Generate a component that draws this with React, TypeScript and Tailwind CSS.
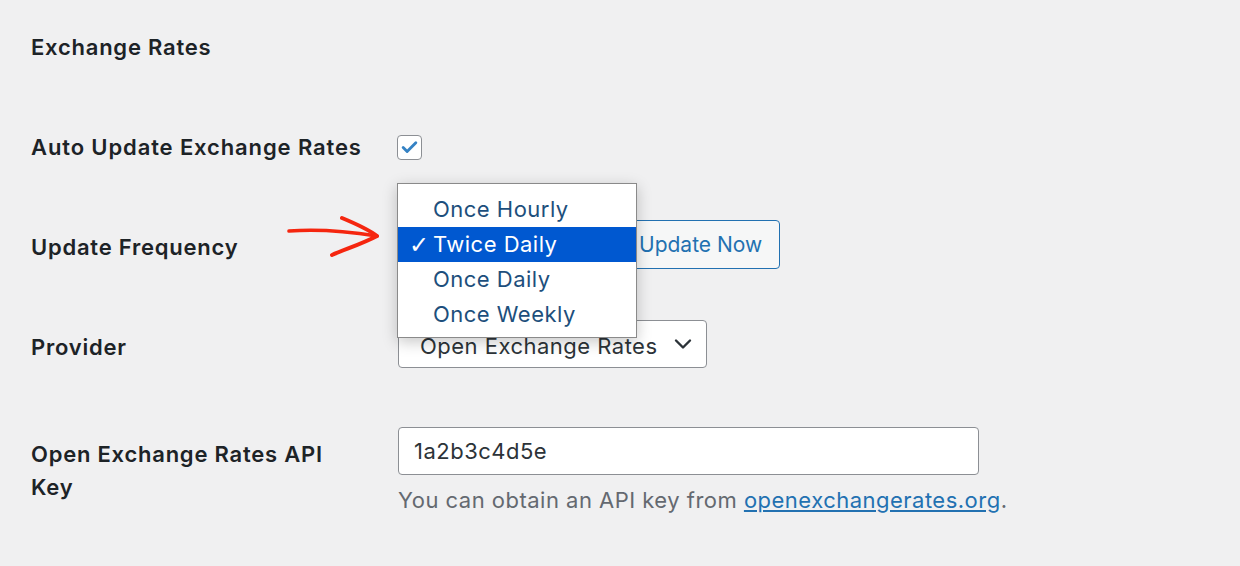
import { Check } from "lucide-react";

const font = { fontFamily: "Inter, 'Noto Sans', 'Liberation Sans', sans-serif" };

function Chevron() {
  return (
    <svg width="18" height="12" viewBox="0 0 18 12" fill="none">
      <path d="M2 2.5 L9 9.5 L16 2.5" stroke="#2c3338" strokeWidth="2.4" strokeLinecap="round" strokeLinejoin="round" />
    </svg>
  );
}

function RedArrow() {
  return (
    <svg
      className="absolute left-[253px] top-[14px] pointer-events-none"
      width="100"
      height="50"
      viewBox="0 0 100 50"
      fill="none"
    >
      <path d="M5 20 C32 18 62 20 93 25" stroke="#f5260f" strokeWidth="3.6" strokeLinecap="round" />
      <path d="M58 7 C70 12 84 18 93 25 C80 32 62 38 48 44" stroke="#f5260f" strokeWidth="4" strokeLinecap="round" strokeLinejoin="round" />
    </svg>
  );
}

const options = ["Once Hourly", "Twice Daily", "Once Daily", "Once Weekly"];

export default function App() {
  return (
    <div className="min-h-[566px] w-[1240px] bg-[#f0f0f1] px-[31px] pt-[32px] text-[#1d2327]" style={font}>
      <h2 className="mb-[35px] text-[22px] font-semibold leading-[30px] tracking-[0.035em]">Exchange Rates</h2>

      <div className="flex h-[100px] items-center">
        <div className="w-[366px] text-[22px] font-semibold tracking-[0.04em]">Auto Update Exchange Rates</div>
        <div className="flex h-[25px] w-[25px] items-center justify-center rounded-[4px] border border-[#8c8f94] bg-white">
          <Check size={19} strokeWidth={3.6} color="#3582c4" />
        </div>
      </div>

      <div className="relative flex h-[100px] items-center">
        <RedArrow />
        <div className="w-[366px] text-[22px] font-semibold tracking-[0.035em]">Update Frequency</div>
        <div className="-mt-[5px] h-[47px] w-[218px] rounded-[4px] border border-[#2271b1] bg-white" />
        <button className="-mt-[5px] ml-[7px] h-[49px] rounded-[4px] border border-[#2271b1] bg-[#f6f7f7] pl-[16px] pr-[17px] text-[21px] text-[#2271b1]">
          Update Now
        </button>

        <div className="absolute left-[366px] top-[-14px] w-[240px] border border-[#8a8a8a] bg-white pb-[5px] pt-[8px] shadow-[0_4px_14px_rgba(0,0,0,0.22)]">
          {options.map((o, i) => (
            <div
              key={o}
              className={
                "relative flex h-[35px] items-center pl-[35px] text-[22px] tracking-[0.022em] " +
                (i === 1 ? "bg-[#0058d0] text-white" : "text-[#1d4f7c]")
              }
            >
              {i === 1 && (
                <span className="absolute left-[11px] text-[24px]" style={{ fontFamily: "'DejaVu Sans', sans-serif" }}>
                  ✓
                </span>
              )}
              {o}
            </div>
          ))}
        </div>
      </div>

      <div className="flex h-[100px] items-center">
        <div className="w-[367px] text-[22px] font-semibold tracking-[0.035em]">Provider</div>
        <div className="-mt-[6px] flex h-[48px] w-[309px] items-center justify-between rounded-[4px] border border-[#8c8f94] bg-white pl-[21px] pr-[14px] text-[22px] tracking-[0.022em] text-[#2c3338]">
          <span className="mt-[4px]">Open Exchange Rates</span>
          <Chevron />
        </div>
      </div>

      <div className="flex">
        <div className="w-[367px] pr-[30px] pt-[41px] text-[22px] font-semibold leading-[33px] tracking-[0.035em]">
          Open Exchange Rates API Key
        </div>
        <div className="pt-[30px]">
          <div className="flex h-[48px] w-[581px] items-center rounded-[4px] border border-[#8c8f94] bg-white pl-[15px] text-[22px] tracking-[0.022em] text-[#2c3338]">
            1a2b3c4d5e
          </div>
          <p className="mt-[10px] text-[22px] leading-[30px] tracking-[0.022em] text-[#646970]">
            You can obtain an API key from{" "}
            <a className="text-[#2271b1] underline underline-offset-2">openexchangerates.org</a>.
          </p>
        </div>
      </div>
    </div>
  );
}
